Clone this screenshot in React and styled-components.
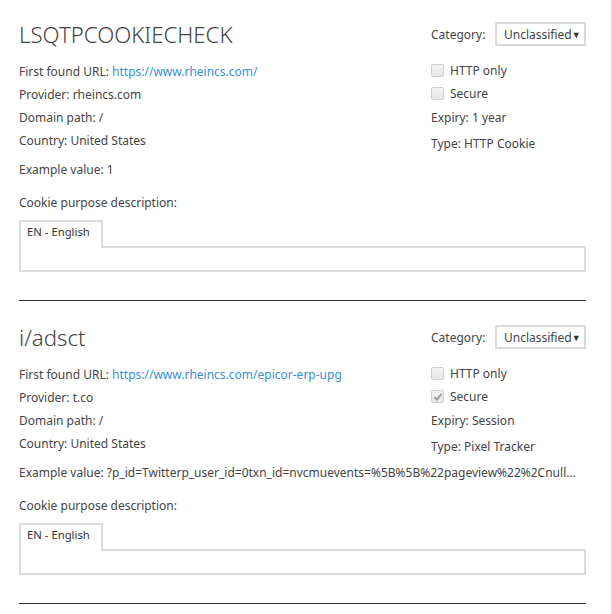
import React from "react";
import styled, { createGlobalStyle } from "styled-components";

const Global = createGlobalStyle`
  html, body { margin: 0; padding: 0; background: #fff; }
  body { font-family: "Noto Sans", "Open Sans", sans-serif; color: #444; }
  * { box-sizing: border-box; }
`;

const Page = styled.div`
  width: 612px;
  min-height: 614px;
  border-right: 1px solid #dcdcdc;
  padding: 0 25px 0 19px;
`;

const Section = styled.section`
  padding-top: 22px;
  border-bottom: 1px solid #333;
  padding-bottom: 28px;
  & + & {
    padding-top: 24px;
  }
`;

const Grid = styled.div`
  display: grid;
  grid-template-columns: 322px 1fr;
  column-gap: 90px;
`;

const Title = styled.h2`
  margin: 0;
  height: 24px;
  display: flex;
  align-items: center;
  font-weight: 300;
  font-size: 22.2px;
  color: #444;
  white-space: nowrap;
`;

const CategoryRow = styled.div`
  display: flex;
  align-items: center;
  justify-content: space-between;
  height: 24px;
  font-size: 12px;
`;

const Select = styled.div`
  width: 91px;
  height: 24px;
  border: 2px solid #dadada;
  display: flex;
  align-items: center;
  justify-content: space-between;
  padding: 0 8px 0 7px;
  font-size: 12px;
  color: #444;
`;

const Arrow = styled.span`
  font-size: 9px;
  color: #333;
`;

const LeftCol = styled.div`
  padding-top: 14px;
  display: flex;
  flex-direction: column;
  overflow: hidden;
`;

const RightCol = styled.div`
  padding-top: 13px;
  display: flex;
  flex-direction: column;
`;

const Line = styled.div`
  height: ${(p) => p.$h || 23}px;
  line-height: ${(p) => p.$h || 23}px;
  font-size: 12px;
  white-space: nowrap;
  overflow: hidden;
  text-overflow: ${(p) => (p.$ellipsis ? "ellipsis" : "clip")};
`;

const Link = styled.a`
  color: #3a8fd6;
  text-decoration: none;
`;

const CheckRow = styled.label`
  height: 23px;
  display: flex;
  align-items: center;
  gap: 6px;
  font-size: 12px;
`;

const Box = styled.span`
  width: 13px;
  height: 13px;
  border: 1px solid #cfcfcf;
  border-radius: 2px;
  background: linear-gradient(#f4f4f4, #e6e6e6);
  display: inline-flex;
  align-items: center;
  justify-content: center;
`;

const Example = styled(Line)`
  margin-top: 1px;
  padding-right: 8px;
`;

const DescLabel = styled(Line)`
  margin-top: 10px;
`;

const Tabs = styled.div`
  margin-top: 6px;
  display: flex;
  flex-direction: column;
`;

const Tab = styled.div`
  align-self: flex-start;
  height: 28px;
  padding: 2px 11px 0 6px;
  border: 2px solid #dcdcdc;
  border-bottom: none;
  background: #fff;
  font-size: 11.3px;
  color: #333;
  margin-bottom: -2px;
  position: relative;
  z-index: 1;
`;

const Panel = styled.div`
  height: 26px;
  border: 2px solid #dcdcdc;
`;

function Checkbox({ checked, label }) {
  return (
    <CheckRow>
      <Box>
        {checked && (
          <svg width="10" height="10" viewBox="0 0 10 10">
            <path d="M1.5 5.2 L4 7.6 L8.6 1.8" fill="none" stroke="#9a9a9a" strokeWidth="1.8" />
          </svg>
        )}
      </Box>
      {label}
    </CheckRow>
  );
}

function Cookie({ c }) {
  return (
    <Section>
      <Grid>
        <Title>{c.name}</Title>
        <CategoryRow>
          <span>Category:</span>
          <Select>
            <span>Unclassified</span>
            <Arrow>▼</Arrow>
          </Select>
        </CategoryRow>
        <LeftCol>
          <Line>
            First found URL: <Link href="#">{c.url}</Link>
          </Line>
          <Line>Provider: {c.provider}</Line>
          <Line>Domain path: /</Line>
          <Line>Country: United States</Line>
        </LeftCol>
        <RightCol>
          <Checkbox label="HTTP only" />
          <Checkbox label="Secure" checked={c.secure} />
          <Line $h={26}>Expiry: {c.expiry}</Line>
          <Line $h={26}>Type: {c.type}</Line>
        </RightCol>
      </Grid>
      <Example $ellipsis>Example value: {c.example}</Example>
      <DescLabel>Cookie purpose description:</DescLabel>
      <Tabs>
        <Tab>EN - English</Tab>
        <Panel />
      </Tabs>
    </Section>
  );
}

const cookies = [
  {
    name: "LSQTPCOOKIECHECK",
    url: "https://www.rheincs.com/",
    provider: "rheincs.com",
    secure: false,
    expiry: "1 year",
    type: "HTTP Cookie",
    example: "1",
  },
  {
    name: "i/adsct",
    url: "https://www.rheincs.com/epicor-erp-upgrade/",
    provider: "t.co",
    secure: true,
    expiry: "Session",
    type: "Pixel Tracker",
    example:
      "?p_id=Twitterp_user_id=0txn_id=nvcmuevents=%5B%5B%22pageview%22%2Cnull%5D%5D&tw_sale_amount=0",
  },
];

export default function App() {
  return (
    <>
      <Global />
      <Page>
        {cookies.map((c) => (
          <Cookie key={c.name} c={c} />
        ))}
      </Page>
    </>
  );
}
